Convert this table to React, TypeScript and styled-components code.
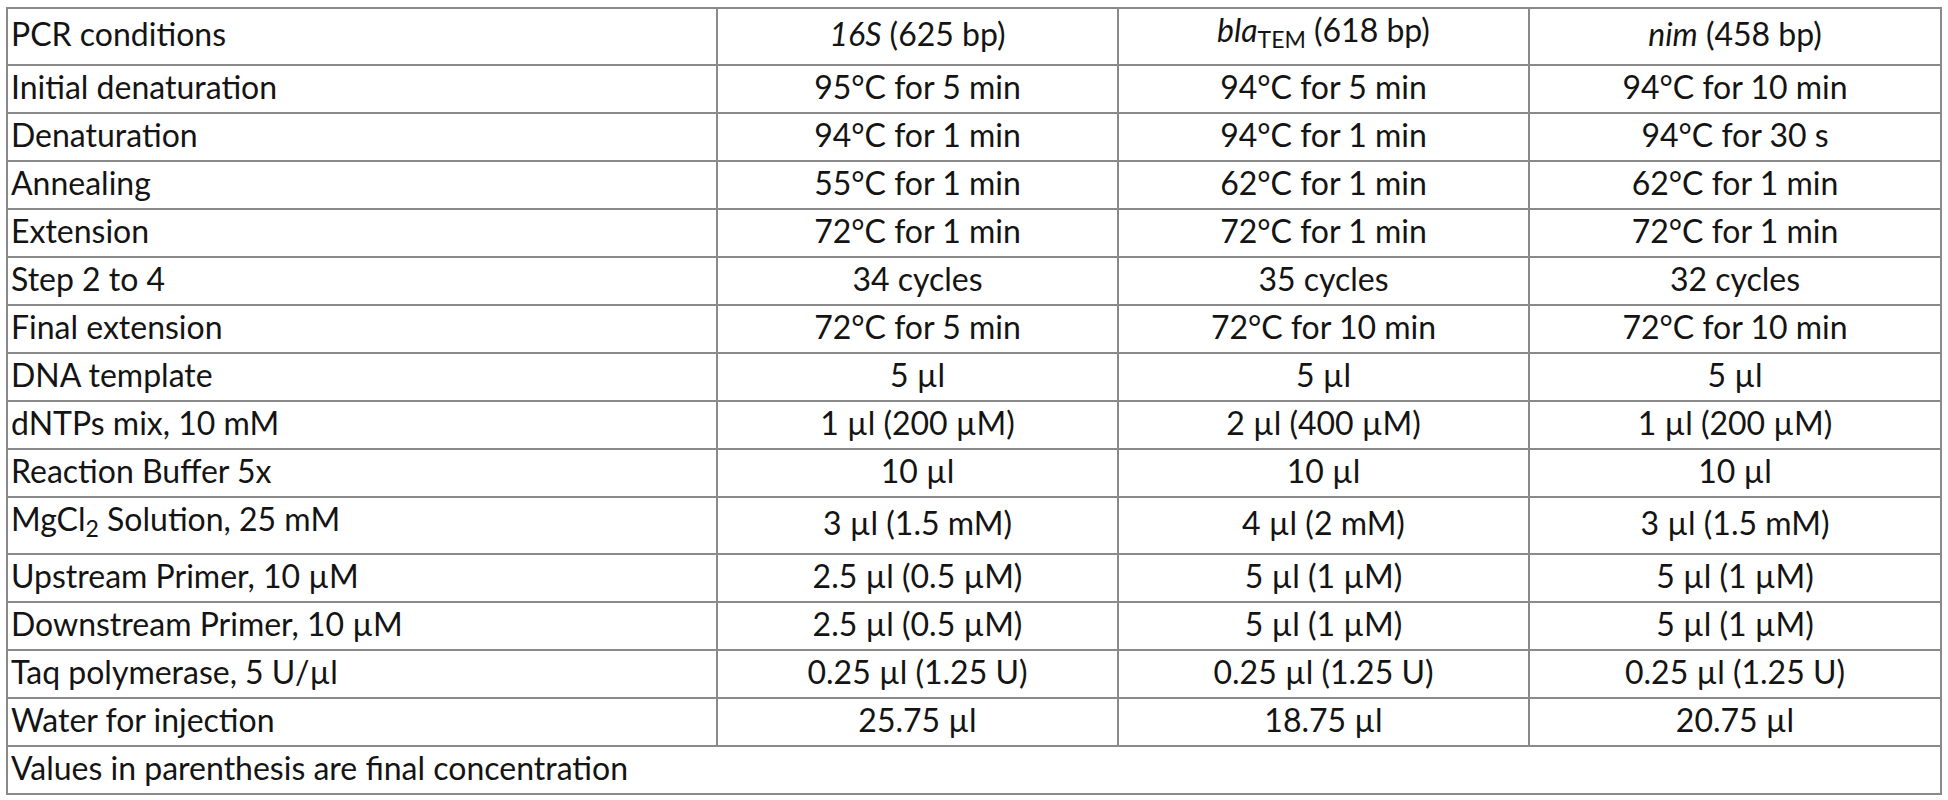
import React from "react";
import styled, { createGlobalStyle } from "styled-components";

const GlobalStyle = createGlobalStyle`
  html, body {
    margin: 0;
    padding: 0;
    background: #ffffff;
  }
`;

const Page = styled.div`
  padding: 7px 0 0 6px;
  font-family: Lato, "Open Sans", sans-serif;
  color: #141414;
`;

const Table = styled.table`
  width: 1934px;
  table-layout: fixed;
  border-collapse: collapse;
  font-size: 32px;
  line-height: 30px;
`;

const Cell = styled.td<{ $align?: "left" | "center" }>`
  border: 2px solid #8a8a8a;
  padding: 6px 3px 10px 3px;
  text-align: ${(p) => p.$align ?? "center"};
  white-space: nowrap;
`;

const Gene = styled.i`
  font-style: italic;
`;

const Sub = styled.sub`
  font-size: 0.72em;
  vertical-align: -0.26em;
`;

type Row = [React.ReactNode, React.ReactNode, React.ReactNode, React.ReactNode];

const rows: Row[] = [
  [
    "PCR conditions",
    <><Gene>16S</Gene> (625 bp)</>,
    <><Gene>bla</Gene><Sub>TEM</Sub> (618 bp)</>,
    <><Gene>nim</Gene> (458 bp)</>,
  ],
  ["Initial denaturation", "95°C for 5 min", "94°C for 5 min", "94°C for 10 min"],
  ["Denaturation", "94°C for 1 min", "94°C for 1 min", "94°C for 30 s"],
  ["Annealing", "55°C for 1 min", "62°C for 1 min", "62°C for 1 min"],
  ["Extension", "72°C for 1 min", "72°C for 1 min", "72°C for 1 min"],
  ["Step 2 to 4", "34 cycles", "35 cycles", "32 cycles"],
  ["Final extension", "72°C for 5 min", "72°C for 10 min", "72°C for 10 min"],
  ["DNA template", "5 µl", "5 µl", "5 µl"],
  ["dNTPs mix, 10 mM", "1 µl (200 µM)", "2 µl (400 µM)", "1 µl (200 µM)"],
  ["Reaction Buffer 5x", "10 µl", "10 µl", "10 µl"],
  [<>MgCl<Sub>2</Sub> Solution, 25 mM</>, "3 µl (1.5 mM)", "4 µl (2 mM)", "3 µl (1.5 mM)"],
  ["Upstream Primer, 10 µM", "2.5 µl (0.5 µM)", "5 µl (1 µM)", "5 µl (1 µM)"],
  ["Downstream Primer, 10 µM", "2.5 µl (0.5 µM)", "5 µl (1 µM)", "5 µl (1 µM)"],
  ["Taq polymerase, 5 U/µl", "0.25 µl (1.25 U)", "0.25 µl (1.25 U)", "0.25 µl (1.25 U)"],
  ["Water for injection", "25.75 µl", "18.75 µl", "20.75 µl"],
];

export default function App() {
  return (
    <Page>
      <GlobalStyle />
      <Table>
        <colgroup>
          <col style={{ width: 710 }} />
          <col style={{ width: 401 }} />
          <col style={{ width: 411 }} />
          <col style={{ width: 412 }} />
        </colgroup>
        <tbody>
          {rows.map((r, i) => (
            <tr key={i}>
              <Cell $align="left">{r[0]}</Cell>
              <Cell>{r[1]}</Cell>
              <Cell>{r[2]}</Cell>
              <Cell>{r[3]}</Cell>
            </tr>
          ))}
          <tr>
            <Cell $align="left" colSpan={4}>
              Values in parenthesis are final concentration
            </Cell>
          </tr>
        </tbody>
      </Table>
    </Page>
  );
}
